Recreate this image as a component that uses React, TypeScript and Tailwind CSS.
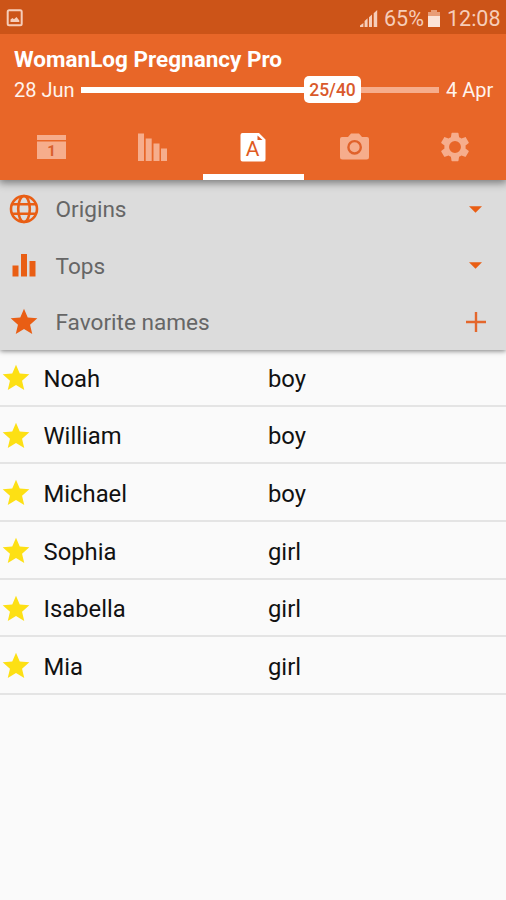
import React from "react";

const STAR = "M12 17.27 18.18 21l-1.64-7.03L22 9.24l-7.19-.61L12 2 9.19 8.63 2 9.24l5.46 4.73L5.82 21z";

const names = [
  { name: "Noah", gender: "boy" },
  { name: "William", gender: "boy" },
  { name: "Michael", gender: "boy" },
  { name: "Sophia", gender: "girl" },
  { name: "Isabella", gender: "girl" },
  { name: "Mia", gender: "girl" },
];

function StatusBar() {
  return (
    <div className="relative z-30 h-[34px] bg-[#cc5418] flex items-center pl-[6px] pr-[7px] text-[#f6cdb9]">
      <svg className="w-[18px] h-[18px] mt-[2px]" viewBox="0 0 18 18" fill="none">
        <rect x="1.7" y="1.2" width="14" height="15" rx="1.5" stroke="currentColor" strokeWidth="2" />
        <path d="M4.5 13V10.5L6.5 9l1.5 1.3L10.5 8l2.8 3.5V13z" fill="currentColor" />
      </svg>
      <div className="ml-auto flex items-center pt-[3px]">
        <svg className="w-[18px] h-[18px] mr-[6px] mb-[2px]" viewBox="0 0 18 18" fill="currentColor">
          <path d="M0 18v-1.500L3.400 14v4zM4.600 18v-6l3-2.800V18zM9 18V8.300l3-2.800V18zM13.700 18V4.200L17.200 1v17z" />
        </svg>
        <span className="text-[21.5px] leading-[24px] w-[40px] whitespace-nowrap">65%</span>
        <svg className="w-[12px] h-[17px] ml-[4px] mr-[7px] mb-px" viewBox="0 0 12 17">
          <path d="M3 0h6v2h3v4H0V2h3z" fill="#e89d78" />
          <path d="M0 6h12v11H0z" fill="#fbe3d8" />
        </svg>
        <span className="text-[21.5px] leading-[24px] w-[52px] whitespace-nowrap">12:08</span>
      </div>
    </div>
  );
}

function Progress() {
  return (
    <div className="flex items-center h-[27px] pl-[14px] text-[20px] text-[#fff3ec]">
      <span className="shrink-0 w-[67px] whitespace-nowrap">28 Jun</span>
      <div className="shrink-0 w-[223px] h-[6px] bg-white" />
      <div className="shrink-0 w-[57px] h-[27px] rounded-[5px] bg-white text-[#d9592b] text-[17.5px] font-medium leading-[28px] text-center">
        25/40
      </div>
      <div className="shrink-0 w-[78px] h-[6px] bg-[#f6ad8c]" />
      <span className="ml-[7px] whitespace-nowrap">4 Apr</span>
    </div>
  );
}

const tabs = [
  <svg className="w-[30px] h-[30px]" viewBox="0 0 30 30">
    <path d="M1 3h29v5H1z M1 9.500h29V27H1z" fill="#f6ad8c" />
    <text x="15.500" y="23.500" textAnchor="middle" fontSize="15" fontWeight="700" fill="#d9602c">
      1
    </text>
  </svg>,
  <svg className="w-[30px] h-[30px]" viewBox="0 0 30 30" fill="#f6ad8c">
    <path d="M1 1.500h6V29H1zM8.700 6.500h6V29h-6zM16.500 11.500h6V29h-6zM24 16.500h6V29h-6z" />
  </svg>,
  <svg className="w-[30px] h-[30px]" viewBox="0 0 30 30">
    <path d="M4.500 1H21l6.500 6.500v20a2 2 0 0 1-2 2h-21a2 2 0 0 1-2-2V3a2 2 0 0 1 2-2z" fill="#fff" />
    <path d="M19.500 3.500v4.500h5z" fill="#e05a22" />
    <text x="14.500" y="24" textAnchor="middle" fontSize="21" fontWeight="400" fill="#e05a22">
      A
    </text>
  </svg>,
  <svg className="w-[30px] h-[30px]" viewBox="0 0 30 30">
    <path d="M3 5h6l3-3.500h8L23 5h5a2 2 0 0 1 2 2v18a2.500 2.500 0 0 1-2.500 2.500h-24A2.500 2.500 0 0 1 1 25V7a2 2 0 0 1 2-2z" fill="#f6ad8c" />
    <circle cx="15.600" cy="15.300" r="6.200" fill="none" stroke="#e0622b" strokeWidth="2.400" />
  </svg>,
  <svg className="w-[34px] h-[34px]" viewBox="0 0 24 24" fill="#f6ad8c">
    <path d="M19.430 12.980c.04-.320.070-.640.070-.980s-.030-.660-.070-.980l2.110-1.650c.190-.150.240-.420.120-.640l-2-3.460c-.120-.220-.390-.300-.610-.220l-2.490 1c-.520-.400-1.080-.730-1.690-.980l-.380-2.650C14.460 2.180 14.250 2 14 2h-4c-.250 0-.460.180-.490.420l-.380 2.650c-.610.250-1.170.590-1.690.980l-2.490-1c-.230-.090-.490 0-.610.220l-2 3.460c-.130.220-.070.490.120.640l2.110 1.650c-.040.320-.070.650-.070.980s.030.660.070.980l-2.110 1.650c-.190.150-.240.420-.120.640l2 3.460c.120.220.390.300.610.220l2.490-1c.520.400 1.080.730 1.690.980l.380 2.650c.030.240.240.420.490.420h4c.250 0 .460-.180.490-.420l.380-2.650c.610-.250 1.170-.590 1.690-.980l2.490 1c.230.090.490 0 .610-.220l2-3.460c.120-.220.070-.490-.120-.640zM12 16.200a4.200 4.200 0 1 1 0-8.400 4.200 4.200 0 0 1 0 8.400z" />
  </svg>,
];

function Header() {
  return (
    <header className="relative z-20 h-[146px] bg-[#e86628] shadow-[0_2px_8px_1px_rgba(0,0,0,0.45)]">
      <h1 className="h-[42px] pt-[11px] pl-[14px] text-[22.500px] leading-[28px] font-bold text-white">
        WomanLog Pregnancy Pro
      </h1>
      <Progress />
      <nav className="grid grid-cols-5 h-[77px] pl-px">
        {tabs.map((icon, i) => (
          <div
            key={i}
            className={`flex items-center justify-center pt-[16px] pr-[2px] border-b-[6px] ${
              i === 2 ? "border-white" : "border-transparent"
            }`}
          >
            {icon}
          </div>
        ))}
      </nav>
    </header>
  );
}

const Caret = () => (
  <svg className="w-[13px] h-[7px] mr-[24px]" viewBox="0 0 14 7">
    <path d="M0 0h14L7 7z" fill="#e95e14" />
  </svg>
);

const filters = [
  {
    label: "Origins",
    icon: (
      <svg className="w-[30px] h-[30px]" viewBox="0 0 30 30" fill="none" stroke="#e95e14" strokeWidth="2.600">
        <circle cx="15" cy="15" r="13" />
        <ellipse cx="15" cy="15" rx="5.800" ry="13" />
        <path d="M3 10.300h24M3 19.700h24" />
      </svg>
    ),
    action: <Caret />,
  },
  {
    label: "Tops",
    icon: (
      <svg className="w-[30px] h-[30px]" viewBox="0 0 30 30" fill="#e95e14">
        <path d="M3.500 15.500h6V26.500h-6zM12 4h6v22.500h-6zM20.500 11h6v15.500h-6z" />
      </svg>
    ),
    action: <Caret />,
  },
  {
    label: "Favorite names",
    icon: (
      <svg className="w-[32px] h-[32px]" viewBox="0 0 24 24" fill="#e95e14">
        <path d={STAR} />
      </svg>
    ),
    action: (
      <svg className="w-[20px] h-[20px] mr-[20px]" viewBox="0 0 20 20">
        <path d="M0 10h20M10 0v20" stroke="#e4672c" strokeWidth="2.400" />
      </svg>
    ),
  },
];

export default function App() {
  return (
    <div className="w-full h-screen overflow-hidden bg-[#fafafa] font-[Roboto,sans-serif]">
      <StatusBar />
      <Header />
      <section className="relative z-10 h-[170px] pt-px bg-[#dcdcdc] shadow-[0_1px_5px_rgba(0,0,0,0.5)]">
        {filters.map(({ label, icon, action }) => (
          <div key={label} className="flex items-center h-[56.300px]">
            <div className="w-[55.500px] pr-[7px] flex justify-center">{icon}</div>
            <span className="flex-1 pt-[2px] text-[22.600px] text-[#666]">{label}</span>
            {action}
          </div>
        ))}
      </section>
      <ul className="-mt-px">
        {names.map(({ name, gender }) => (
          <li
            key={name}
            className="flex items-center h-[57.700px] pt-[2px] border-b-2 border-[#e4e4e4] text-[23.800px] text-[#111]"
          >
            <svg className="w-[32px] h-[32px] mr-[11.500px]" viewBox="0 0 24 24" fill="#fde014">
              <path d={STAR} />
            </svg>
            <span className="w-[224.500px] pt-[3px]">{name}</span>
            <span className="pt-[3px]">{gender}</span>
          </li>
        ))}
      </ul>
    </div>
  );
}
